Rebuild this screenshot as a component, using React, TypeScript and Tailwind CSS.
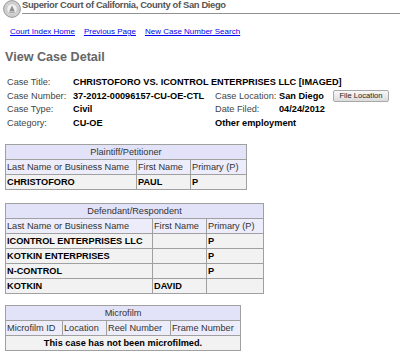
import React from 'react';

const Seal = () => (
  <svg width="18" height="18" viewBox="0 0 20 20" className="shrink-0">
    <circle cx="10" cy="10" r="9.3" fill="#dcdcdc" stroke="#7a7a7a" strokeWidth="0.9" />
    <circle cx="10" cy="10" r="7.6" fill="none" stroke="#9a9a9a" strokeWidth="0.6" strokeDasharray="0.8 0.6" />
    <circle cx="10" cy="10" r="6" fill="#f0f0f0" stroke="#a0a0a0" strokeWidth="0.6" />
    <path d="M6.8 12.8 L10 6 L13.2 12.8 Z" fill="#909090" />
    <path d="M7 14 H13" stroke="#808080" strokeWidth="0.8" />
  </svg>
);

const cell = 'border border-[#a0a0a0] px-[1px] h-[15px] leading-[13px]';
const label = 'text-[#444]';

const App: React.FC = () => {
  const defendants = [
    { last: 'ICONTROL ENTERPRISES LLC', first: '', primary: 'P' },
    { last: 'KOTKIN ENTERPRISES', first: '', primary: 'P' },
    { last: 'N-CONTROL', first: '', primary: 'P' },
    { last: 'KOTKIN', first: 'DAVID', primary: '' },
  ];

  return (
    <div className="w-[400px] h-[352px] overflow-hidden bg-white text-[9.2px] text-black font-['Liberation_Sans',Arial,sans-serif]">
      {/* Header */}
      <div className="flex items-start pl-[3px] h-[17px]">
        <Seal />
        <div className="flex-1 ml-[1px]">
          <div className="font-bold text-[#555] text-[9.4px] tracking-[-0.35px] leading-[10px]">
            Superior Court of California, County of San Diego
          </div>
          <div className="h-[1px] bg-[#909090] mt-[3px]" />
        </div>
      </div>

      {/* Nav links */}
      <div className="flex gap-[9px] pl-[10px] mt-[9px] text-[8px] leading-[11px] text-[#0000ee] underline">
        <a href="#">Court Index Home</a>
        <a href="#">Previous Page</a>
        <a href="#">New Case Number Search</a>
      </div>

      <h2 className="font-bold text-[#666] text-[12.6px] leading-[15px] pl-[5px] mt-[13px]">View Case Detail</h2>

      {/* Case info */}
      <div className="pl-[7px] mt-[11px] leading-[13.5px]">
        <div className="flex items-center h-[13.5px]">
          <span className={`w-[66px] ${label}`}>Case Title:</span>
          <span className="font-bold">CHRISTOFORO VS. ICONTROL ENTERPRISES LLC [IMAGED]</span>
        </div>
        <div className="flex items-center h-[13.5px]">
          <span className={`w-[66px] ${label}`}>Case Number:</span>
          <span className="w-[142px] font-bold">37-2012-00096157-CU-OE-CTL</span>
          <span className={`w-[64px] ${label}`}>Case Location:</span>
          <span className="w-[54px] font-bold">San Diego</span>
          <button className="h-[12px] w-[56px] text-[7.6px] leading-[10px] border border-[#a8a8a8] rounded-[2px] bg-gradient-to-b from-[#f8f8f8] to-[#dcdcdc] text-[#222]">
            File Location
          </button>
        </div>
        <div className="flex items-center h-[13.5px]">
          <span className={`w-[66px] ${label}`}>Case Type:</span>
          <span className="w-[142px] font-bold">Civil</span>
          <span className={`w-[64px] ${label}`}>Date Filed:</span>
          <span className="font-bold">04/24/2012</span>
        </div>
        <div className="flex items-center h-[13.5px]">
          <span className={`w-[66px] ${label}`}>Category:</span>
          <span className="w-[142px] font-bold">CU-OE</span>
          <span className="font-bold">Other employment</span>
        </div>
      </div>

      {/* Plaintiff */}
      <table className="ml-[5px] mt-[14px] border-collapse border border-[#999]">
        <tbody>
          <tr className="bg-[#e2e2f8]">
            <td colSpan={3} className={`${cell} text-center text-[#333]`}>Plaintiff/Petitioner</td>
          </tr>
          <tr className="bg-[#ececfa] text-[#333]">
            <td className={`${cell} w-[131px]`}>Last Name or Business Name</td>
            <td className={`${cell} w-[54px]`}>First Name</td>
            <td className={`${cell} w-[56px]`}>Primary (P)</td>
          </tr>
          <tr className="bg-[#f2f2f2] font-bold">
            <td className={cell}>CHRISTOFORO</td>
            <td className={cell}>PAUL</td>
            <td className={cell}>P</td>
          </tr>
        </tbody>
      </table>

      {/* Defendant */}
      <table className="ml-[5px] mt-[13px] border-collapse border border-[#999]">
        <tbody>
          <tr className="bg-[#e2e2f8]">
            <td colSpan={3} className={`${cell} text-center text-[#333]`}>Defendant/Respondent</td>
          </tr>
          <tr className="bg-[#ececfa] text-[#333]">
            <td className={`${cell} w-[147px]`}>Last Name or Business Name</td>
            <td className={`${cell} w-[54px]`}>First Name</td>
            <td className={`${cell} w-[57px]`}>Primary (P)</td>
          </tr>
          {defendants.map((d) => (
            <tr key={d.last} className="bg-[#f2f2f2] font-bold">
              <td className={cell}>{d.last}</td>
              <td className={cell}>{d.first}</td>
              <td className={cell}>{d.primary}</td>
            </tr>
          ))}
        </tbody>
      </table>

      {/* Microfilm */}
      <table className="ml-[5px] mt-[11px] border-collapse border border-[#999]">
        <tbody>
          <tr className="bg-[#e2e2f8]">
            <td colSpan={4} className={`${cell} text-center text-[#333]`}>Microfilm</td>
          </tr>
          <tr className="bg-[#ececfa] text-[#333]">
            <td className={`${cell} w-[57px]`}>Microfilm ID</td>
            <td className={`${cell} w-[44px]`}>Location</td>
            <td className={`${cell} w-[64px]`}>Reel Number</td>
            <td className={`${cell} w-[70px]`}>Frame Number</td>
          </tr>
          <tr className="bg-[#f2f2f2] font-bold">
            <td colSpan={4} className={`${cell} text-center`}>This case has not been microfilmed.</td>
          </tr>
        </tbody>
      </table>
    </div>
  );
};

export default App;
